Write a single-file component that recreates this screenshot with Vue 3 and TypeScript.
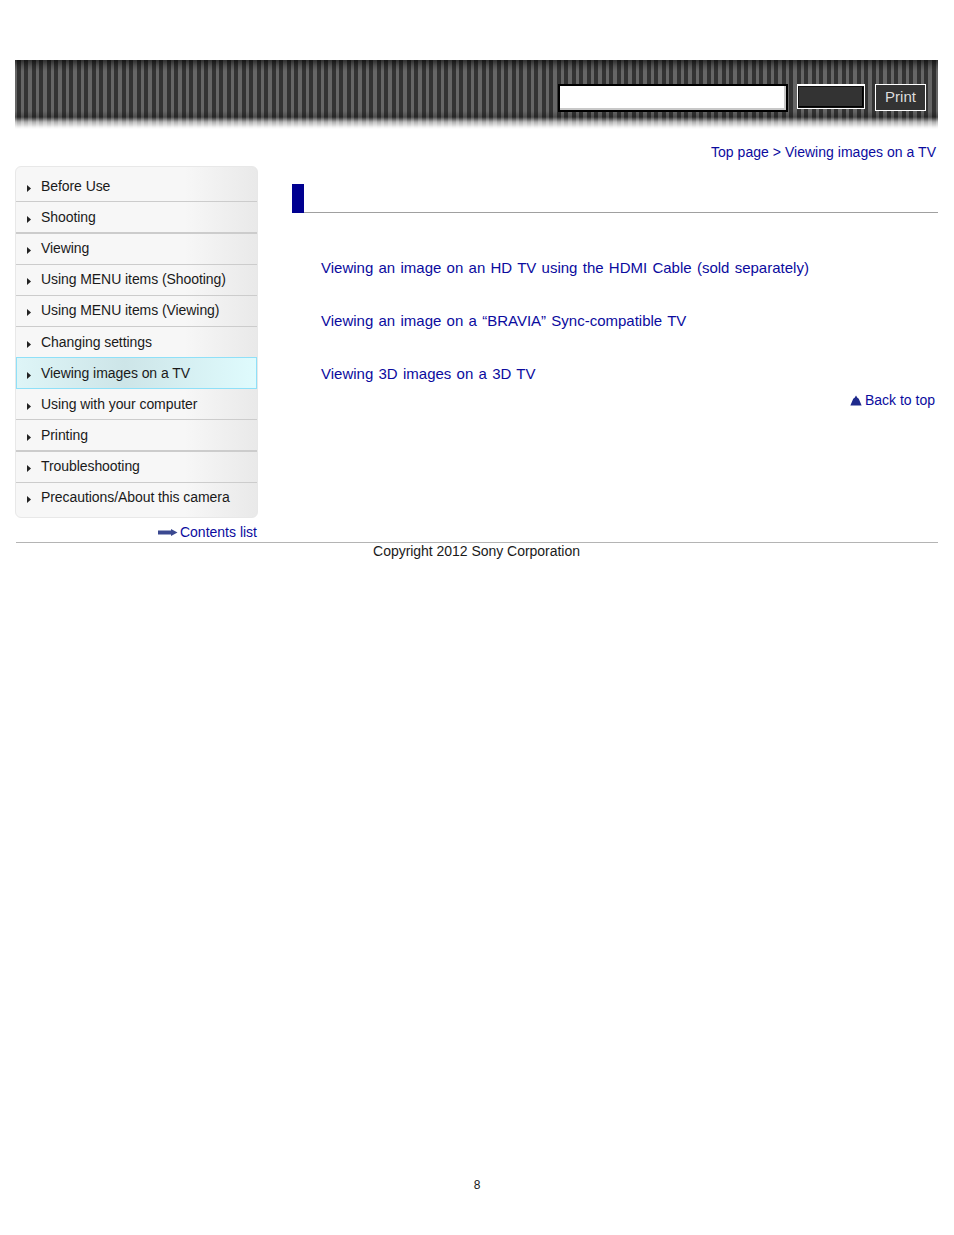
<script setup lang="ts">
const menu = [
  { label: 'Before Use' },
  { label: 'Shooting', thick: true },
  { label: 'Viewing', up: true },
  { label: 'Using MENU items (Shooting)', up: true },
  { label: 'Using MENU items (Viewing)', up: true },
  { label: 'Changing settings' },
  { label: 'Viewing images on a TV', active: true },
  { label: 'Using with your computer' },
  { label: 'Printing', thick: true },
  { label: 'Troubleshooting', up: true },
  { label: 'Precautions/About this camera', up: true, last: true },
]
const links = [
  'Viewing an image on an HD TV using the HDMI Cable (sold separately)',
  'Viewing an image on a “BRAVIA” Sync-compatible TV',
  'Viewing 3D images on a 3D TV',
]
</script>

<template>
  <div class="page">
    <header class="banner">
      <div class="search"></div>
      <div class="go"></div>
      <div class="print">Print</div>
    </header>
    <nav class="crumbs"><a>Top page &gt; Viewing images on a TV</a></nav>
    <div class="columns">
      <aside class="side">
        <ul class="menu">
          <li
            v-for="m in menu"
            :key="m.label"
            class="item"
            :class="{ active: m.active, thick: m.thick, last: m.last, up: m.up }"
          >
            <svg class="tri" width="4" height="7" viewBox="0 0 4 7"><path d="M0 0L4 3.5L0 7Z" fill="#222" /></svg>
            <span>{{ m.label }}</span>
          </li>
        </ul>
        <div class="contents">
          <svg width="20" height="7" viewBox="0 0 20 7"><path d="M0 1.5H13V0L19.5 3.5L13 7V5.5H0Z" fill="#3a4890" /></svg>
          <a>Contents list</a>
        </div>
      </aside>
      <main class="main">
        <div class="title"><span class="mark"></span></div>
        <div class="links">
          <a v-for="l in links" :key="l" class="link">{{ l }}</a>
        </div>
        <div class="back">
          <svg width="12" height="11" viewBox="0 0 13 11"><path d="M6.5 0L8 2.5L9.5 3.5L12.6 11H0.4L3.5 3.5L5 2.5Z" fill="#1f2a8c" /></svg>
          <a>Back to top</a>
        </div>
      </main>
    </div>
    <footer class="foot">Copyright 2012 Sony Corporation</footer>
    <div class="pageno">8</div>
  </div>
</template>

<style>
html, body { margin: 0; background: #fff; }
</style>

<style scoped>
.page {
  width: 954px;
  height: 1235px;
  padding-top: 60px;
  box-sizing: border-box;
  font-family: "Liberation Sans", Arial, sans-serif;
  font-size: 14px;
  color: #1a1a1a;
  display: flex;
  flex-direction: column;
}
a { color: #0b0b9e; }
.banner {
  height: 69px;
  margin: 0 16px 0 15px;
  display: flex;
  align-items: flex-start;
  padding-top: 24px;
  box-sizing: border-box;
  background:
    linear-gradient(to bottom, rgba(0,0,0,.55) 0, rgba(0,0,0,.2) 6px, rgba(0,0,0,0) 11px, rgba(0,0,0,0) 51px, rgba(0,0,0,.25) 57px, rgba(255,255,255,.6) 62px, rgba(255,255,255,.93) 67px, #fff 69px),
    repeating-linear-gradient(to right, #666 0 2px, #333 2px 6px, #666 6px 9px, #333 9px 13px, #666 13px 15px);
}
.search {
  width: 226px;
  height: 24px;
  margin-left: 543px;
  background: #fff;
  border: 2px solid #000;
  box-shadow: inset -2px -2px 0 #c8c8c8;
}
.go {
  width: 66px;
  height: 22px;
  margin-left: 9px;
  background: #333;
  border: solid #fff;
  border-width: 2px 1px 1px 1px;
  box-shadow: inset 0 0 0 1px #111, inset -1px -1px 0 1px #000;
}
.print {
  width: 49px;
  height: 25px;
  margin-left: 10px;
  border: 1px solid #fff;
  background: #333;
  color: #ddd;
  font-size: 15px;
  line-height: 24px;
  text-align: center;
}
.crumbs {
  text-align: right;
  padding: 15px 18px 0 0;
  height: 22px;
  line-height: 17px;
  letter-spacing: 0.03px;
}
.columns {
  display: flex;
  padding-left: 15px;
}
.side { width: 243px; }
.menu {
  list-style: none;
  margin: 0;
  padding: 4px 0 0;
  height: 346px;
  border: 1px solid #e8e8e8;
  border-radius: 6px;
  background: linear-gradient(to right, #f7f7f7 70%, #e9e9e9 100%);
  letter-spacing: -0.07px;
}
.item {
  height: 30px;
  display: flex;
  align-items: center;
  padding-left: 11px;
  border-bottom: 1px solid #ccc;
  line-height: 30px;
}
.item.thick { border-bottom-width: 2px; }
.item.up { height: 28px; padding-bottom: 2px; }
.item.last { border-bottom: 0; }
.item.active {
  background: linear-gradient(to right, #def5f7 0, #cde5e8 45%, #dffbfd 100%);
  border: 1px solid #8fe0f8;
  margin-top: -1px;
  padding-left: 10px;
}
.tri { margin: 4px 10px 0 0; flex: none; }
.contents {
  display: flex;
  justify-content: flex-end;
  align-items: center;
  gap: 2px;
  height: 24px;
  padding: 4px 1px 0 0;
  box-sizing: border-box;
}
.main { margin: 18px 0 0 34px; width: 646px; }
.title {
  height: 28px;
  border-bottom: 1px solid #a0a0a0;
}
.mark { display: block; width: 12px; height: 29px; background: #000090; }
.links {
  display: flex;
  flex-direction: column;
  padding: 45px 0 0 29px;
  gap: 33px;
  font-size: 15px;
  word-spacing: 1.1px;
}
.link { line-height: 20px; height: 20px; }
.back {
  display: flex;
  justify-content: flex-end;
  align-items: center;
  gap: 3px;
  padding: 7px 3px 0 0;
  line-height: 18px;
}
.foot {
  margin: 0 16px;
  border-top: 1px solid #b4b4b4;
  padding-right: 1px;
  text-align: center;
  line-height: 17px;
  letter-spacing: -0.03px;
}
.pageno {
  margin-top: 618px;
  text-align: center;
  font-size: 12px;
}
</style>
